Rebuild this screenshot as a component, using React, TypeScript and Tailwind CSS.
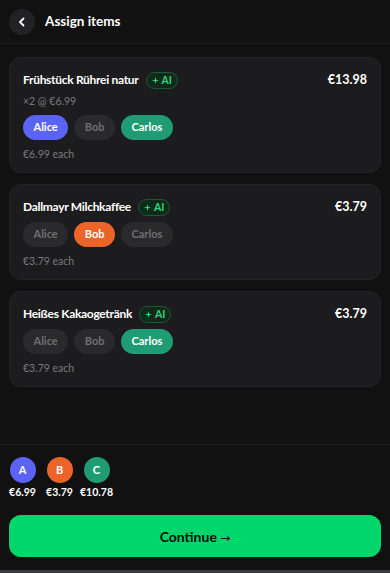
import React from "react";

type P = { name: string; color: string };
const people: P[] = [
  { name: "Alice", color: "bg-[#5b63f5]" },
  { name: "Bob", color: "bg-[#ec6428]" },
  { name: "Carlos", color: "bg-[#1f9c74]" },
];

const items = [
  { title: "Frühstück Rührei natur", price: "€13.98", qty: "×2 @ €6.99", sel: ["Alice", "Carlos"], each: "€6.99 each" },
  { title: "Dallmayr Milchkaffee", price: "€3.79", qty: null, sel: ["Bob"], each: "€3.79 each" },
  { title: "Heißes Kakaogetränk", price: "€3.79", qty: null, sel: ["Carlos"], each: "€3.79 each" },
];

function AiBadge() {
  return (
    <span className="inline-flex items-center gap-[3px] h-[17px] px-[5px] rounded-full bg-[#0f2a1b] border border-[#1c5a36] text-[#2fd57a] text-[10.5px] font-bold leading-none">
      <svg width="7" height="7" viewBox="0 0 10 10"><path d="M5 0 L6 4 L10 5 L6 6 L5 10 L4 6 L0 5 L4 4 Z" fill="#2fd57a" /></svg>
      AI
    </span>
  );
}

export default function App() {
  return (
    <div className="h-[573px] w-[390px] bg-[#111112] text-white flex flex-col overflow-hidden" style={{ fontFamily: 'Lato, "Noto Sans", sans-serif' }}>
      <div className="h-[44px] shrink-0 flex items-center gap-[10px] px-[9px] border-b border-[#1c1c1e]">
        <div className="w-[26px] h-[26px] rounded-full bg-[#222224] flex items-center justify-center">
          <svg width="10" height="10" viewBox="0 0 10 10"><path d="M6.5 1.5 L3 5 L6.5 8.5" stroke="white" strokeWidth="1.8" fill="none" strokeLinecap="round" strokeLinejoin="round" /></svg>
        </div>
        <span className="text-[13.5px] font-bold">Assign items</span>
      </div>

      <div className="flex-1 flex flex-col gap-[11px] px-[9px] pt-[13px]">
        {items.map((it) => (
          <div key={it.title} className="rounded-[12px] bg-[#1c1c1e] border border-[#242426] px-[13px] pt-[13px] pb-[11px]">
            <div className="flex items-center justify-between h-[18px]">
              <div className="flex items-center gap-[7px]">
                <span className="text-[12px] tracking-[-0.3px] font-bold leading-[18px]">{it.title}</span>
                <AiBadge />
              </div>
              <span className="text-[12.5px] font-bold">{it.price}</span>
            </div>
            {it.qty && <div className="text-[10.5px] text-[#7a7a7e] mt-[5px] leading-[14px]">{it.qty}</div>}
            <div className={`flex gap-[6px] ${it.qty ? "mt-[7px]" : "mt-[6px]"}`}>
              {people.map((p) => {
                const on = it.sel.includes(p.name);
                return (
                  <span key={p.name} className={`h-[25px] px-[10.5px] rounded-full flex items-center text-[11px] font-bold ${on ? p.color + " text-white" : "bg-[#2a2a2c] text-[#6f6f73]"}`}>
                    {p.name}
                  </span>
                );
              })}
            </div>
            <div className="text-[10.5px] text-[#7a7a7e] mt-[7px] leading-[14px]">{it.each}</div>
          </div>
        ))}
      </div>

      <div className="shrink-0 border-t border-[#1e1e20] px-[9px] pt-[12px] pb-[13px]">
        <div className="flex gap-[10px]">
          {[
            { l: "A", c: "bg-[#5b63f5]", v: "€6.99" },
            { l: "B", c: "bg-[#ec6428]", v: "€3.79" },
            { l: "C", c: "bg-[#1f9c74]", v: "€10.78" },
          ].map((a) => (
            <div key={a.l} className="w-[27px] flex flex-col items-center">
              <div className={`w-[26px] h-[26px] rounded-full ${a.c} flex items-center justify-center text-[11px] font-bold`}>{a.l}</div>
              <div className="text-[10.5px] font-bold mt-[3px] leading-[13px] whitespace-nowrap">{a.v}</div>
            </div>
          ))}
        </div>
        <button className="mt-[16px] w-full h-[42px] rounded-[12px] bg-[#00d66b] text-[#0b0b0b] text-[14px] font-bold">
          Continue <span style={{ fontFamily: '"DejaVu Sans", sans-serif' }} className="font-normal text-[12px]">→</span>
        </button>
      </div>
      <div className="h-[3px] shrink-0 bg-[#3a3a3c]" />
    </div>
  );
}
